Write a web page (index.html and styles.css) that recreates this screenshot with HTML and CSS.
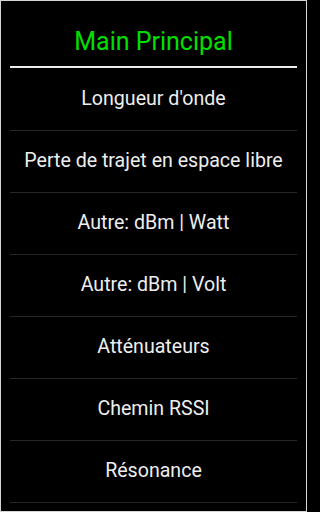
FILE: index.html
```html
<!DOCTYPE html>
<html>
<head>
<meta charset="utf-8">
<link rel="stylesheet" href="styles.css">
</head>
<body>
<div class="screen">
  <div class="title">Main Principal</div>
  <div class="rule"></div>
  <ul class="menu">
    <li class="item">Longueur d'onde</li>
    <li class="item">Perte de trajet en espace libre</li>
    <li class="item">Autre: dBm | Watt</li>
    <li class="item">Autre: dBm | Volt</li>
    <li class="item">Atténuateurs</li>
    <li class="item">Chemin RSSI</li>
    <li class="item">Résonance</li>
  </ul>
</div>
</body>
</html>
```
FILE: styles.css
```css
html, body {
  margin: 0;
  padding: 0;
  background: #000;
}
.screen {
  width: 307px;
  height: 512px;
  box-sizing: border-box;
  border: 1px solid #d4d4d4;
  background: #000;
  font-family: Roboto, "Noto Sans", sans-serif;
  overflow: hidden;
}
.title {
  margin-top: 25px;
  height: 32px;
  line-height: 32px;
  text-align: center;
  color: #00e000;
  font-size: 25px;
}
.rule {
  margin: 8px 9px 0;
  height: 2px;
  background: #ececec;
}
.menu {
  list-style: none;
  margin: 1px 9px 0;
  padding: 0;
}
.item {
  height: 61px;
  padding-bottom: 2px;
  box-sizing: border-box;
  height: 62px;
  border-bottom: 1px solid #262626;
  display: flex;
  align-items: center;
  justify-content: center;
  color: #eeeeee;
  font-size: 19.6px;
}
```
